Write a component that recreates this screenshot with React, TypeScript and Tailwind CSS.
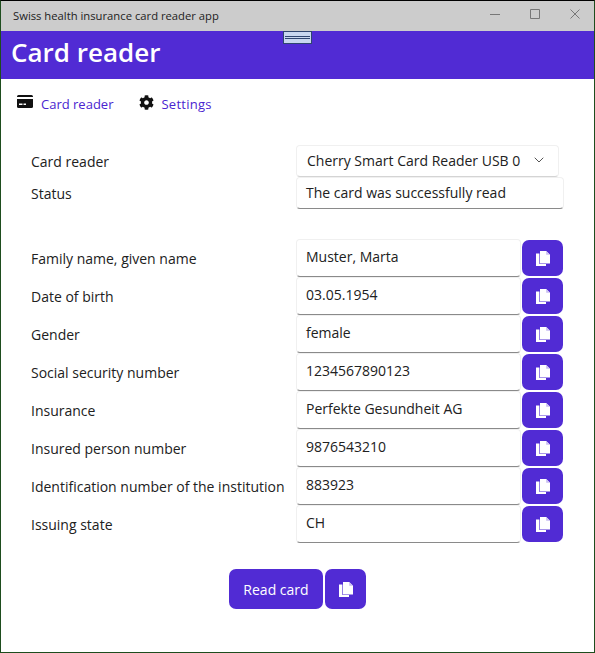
import { FaCog } from 'react-icons/fa';
import { ChevronDown } from 'lucide-react';

const fields = [
  { label: 'Family name, given name', value: 'Muster, Marta' },
  { label: 'Date of birth', value: '03.05.1954' },
  { label: 'Gender', value: 'female' },
  { label: 'Social security number', value: '1234567890123' },
  { label: 'Insurance', value: 'Perfekte Gesundheit AG' },
  { label: 'Insured person number', value: '9876543210' },
  { label: 'Identification number of the institution', value: '883923' },
  { label: 'Issuing state', value: 'CH' },
];

function CopyIcon() {
  return (
    <svg className="h-[15px] w-[14px]" viewBox="0 0 14 15" aria-hidden="true">
      {/* back sheet */}
      <path d="M0 2.5h3.4V13H10v2H0z" fill="#ffffff" />
      {/* front sheet with folded corner */}
      <path d="M4 0h6.2L14 3.8V12.4H4z" fill="#ffffff" />
      <path d="M10.2 0L14 3.8H10.2z" fill="#c9bdf2" />
    </svg>
  );
}

function CardIcon() {
  return (
    <svg className="h-[13px] w-[16px] text-[#111111]" viewBox="0 0 16 13" fill="currentColor" aria-hidden="true">
      <path d="M1.5 0h13A1.5 1.5 0 0 1 16 1.5V2H0v-.5A1.5 1.5 0 0 1 1.5 0z" />
      <path d="M0 4h16v7.5a1.5 1.5 0 0 1-1.5 1.5h-13A1.5 1.5 0 0 1 0 11.5z" />
      <path d="M2 8.5h3.5v1.5H2zM6.5 8.5H9v1.5H6.5z" fill="#ffffff" />
    </svg>
  );
}

function CopyButton() {
  return (
    <button
      type="button"
      aria-label="Copy"
      className="flex h-[36px] w-[41px] items-center justify-center rounded-[7px] bg-[#512bd4] text-white"
    >
      <CopyIcon />
    </button>
  );
}

export default function App() {
  return (
    <div className="relative flex h-[653px] w-[595px] flex-col overflow-hidden border border-[#1e4d1e] border-t-black bg-white font-['Open_Sans',sans-serif] text-[14px] text-[#212121]">
      {/* ── Title bar ─────────────────────────────────────────────────── */}
      <div className="flex h-[30px] shrink-0 items-center justify-between bg-[#cccccc] pr-[14px] pl-[12px]">
        <span className="pt-[1px] text-[11.25px] text-[#222222]">Swiss health insurance card reader app</span>
        <div className="mb-[5px] flex items-center gap-[30px] text-[#777777]">
          <svg className="h-[10px] w-[10px]" viewBox="0 0 10 10" fill="none" stroke="currentColor">
            <path d="M0 5.5h10" />
          </svg>
          <svg className="h-[10px] w-[10px]" viewBox="0 0 10 10" fill="none" stroke="currentColor">
            <path d="M.5.5h9v9h-9z" />
          </svg>
          <svg className="h-[10px] w-[10px]" viewBox="0 0 10 10" fill="none" stroke="currentColor">
            <path d="M.5.5l9 9M9.5.5l-9 9" />
          </svg>
        </div>
      </div>

      {/* ── Header ────────────────────────────────────────────────────── */}
      <header className="relative flex h-[48px] shrink-0 items-start bg-[#512bd4] pl-[10px]">
        <h1 className="text-[26px] leading-[42px] font-semibold text-white">Card reader</h1>
        {/* WebView debug handle */}
        <div className="absolute top-0 left-[282px] flex h-[13px] w-[29px] flex-col justify-center gap-[1px] border border-[#2f4570] bg-[#c9d7f0] px-[1px]">
          <div className="h-px bg-[#2f4570]" />
          <div className="h-px bg-[#2f4570]" />
        </div>
      </header>

      {/* ── Nav ───────────────────────────────────────────────────────── */}
      <nav className="flex h-[50px] shrink-0 items-center pt-[1px] pl-[16px] text-[13px] text-[#4a24d0]">
        <a className="flex items-center">
          <span className="-translate-y-[3px]">
            <CardIcon />
          </span>
          <span className="ml-[8px]">Card reader</span>
        </a>
        <a className="ml-[26px] flex items-center">
          <FaCog className="h-[15px] w-[15px] -translate-y-[2px] text-[#111111]" />
          <span className="ml-[7px] tracking-[0.25px]">Settings</span>
        </a>
      </nav>

      <main className="flex flex-col pl-[30px]">
        {/* ── Reader + status ───────────────────────────────────────────── */}
        <div className="mt-[17px] flex h-[30px] items-center">
          <span className="w-[265px]">Card reader</span>
          <div className="flex h-[32px] w-[263px] items-center justify-between rounded-[4px] border border-[#f0f0f0] border-b-[#d4d4d4] pr-[11px] pb-[2px] pl-[10px]">
            <span>Cherry Smart Card Reader USB 0</span>
            <ChevronDown className="h-[16px] w-[16px] text-[#555555]" strokeWidth={1.5} />
          </div>
        </div>
        <div className="mt-[2px] flex h-[30px] items-center">
          <span className="w-[265px]">Status</span>
          <div className="flex h-[32px] w-[268px] items-center rounded-[4px] border border-[#f0f0f0] border-b-[#8a8a8a] px-[9px] pb-[2px]">
            The card was successfully read
          </div>
        </div>

        {/* ── Card fields ───────────────────────────────────────────────── */}
        <div className="mt-[32px] flex flex-col gap-[2px]">
          {fields.map((field) => (
            <div key={field.label} className="flex h-[36px] items-center">
              <span className="w-[265px] whitespace-nowrap">{field.label}</span>
              <div className="flex h-[38px] w-[225px] items-start rounded-[4px] border border-[#f0f0f0] border-b-[#8a8a8a] px-[9px] pt-[6px]">
                {field.value}
              </div>
              <div className="ml-[1px]">
                <CopyButton />
              </div>
            </div>
          ))}
        </div>

        {/* ── Actions ───────────────────────────────────────────────────── */}
        <div className="mt-[27px] ml-[198px] flex gap-[2px]">
          <button
            type="button"
            className="h-[40px] w-[94px] rounded-[7px] bg-[#512bd4] text-white"
          >
            Read card
          </button>
          <button
            type="button"
            aria-label="Copy all"
            className="flex h-[40px] w-[41px] items-center justify-center rounded-[7px] bg-[#512bd4] text-white"
          >
            <CopyIcon />
          </button>
        </div>
      </main>
    </div>
  );
}
